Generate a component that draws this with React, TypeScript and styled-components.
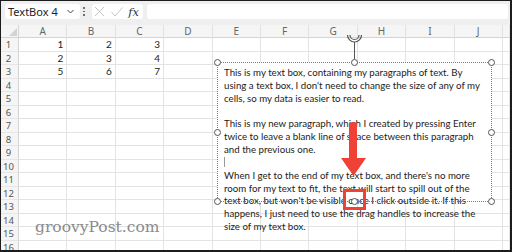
import React from "react";
import styled, { createGlobalStyle } from "styled-components";

const GlobalStyle = createGlobalStyle`
  html, body { margin: 0; padding: 0; background: #1c1c1c; }
  body { width: 512px; height: 252px; overflow: hidden; }
  #root { width: 512px; height: 252px; }
`;

const Frame = styled.div`
  box-sizing: border-box;
  width: 512px;
  height: 252px;
  padding: 1px 2px 2px 1px;
  background: #1c1c1c;
`;

const Window = styled.div`
  position: relative;
  width: 100%;
  height: 100%;
  background: #fff;
  overflow: hidden;
  display: flex;
  flex-direction: column;
`;

const FormulaBar = styled.div`
  flex: 0 0 24px;
  box-sizing: border-box;
  display: flex;
  align-items: flex-start;
  padding: 3px 2px 0 4px;
  background: #efefef;
`;

const Box = styled.div<{ $w?: number; $grow?: boolean }>`
  box-sizing: border-box;
  height: 15px;
  ${(p) => (p.$grow ? "flex: 1 1 auto;" : `flex: 0 0 ${p.$w}px;`)}
  background: #fff;
  border-radius: 3px;
  display: flex;
  align-items: center;
`;

const NameBox = styled(Box)`
  padding: 0 6px 0 3px;
  justify-content: space-between;
  font-family: "Noto Sans", sans-serif;
  font-size: 11px;
  color: #222;
`;

const FuncBox = styled(Box)`
  margin-left: 4px;
  padding: 0 3px 0 2px;
  justify-content: space-between;
`;

const InputBox = styled(Box)`
  margin-left: 4px;
`;

const Dots = styled.div`
  flex: 0 0 8px;
  height: 15px;
  display: flex;
  flex-direction: column;
  align-items: center;
  justify-content: center;
  gap: 2px;
  & > i {
    width: 1.6px;
    height: 1.6px;
    border-radius: 50%;
    background: #555;
  }
`;

const Fx = styled.span`
  font-family: "DejaVu Serif", serif;
  font-style: italic;
  font-size: 11.5px;
  color: #333;
  padding-right: 1px;
`;

const Sheet = styled.div`
  position: relative;
  flex: 1 1 auto;
`;

const Grid = styled.div`
  display: grid;
  grid-template-columns: 18px repeat(10, 48.4px) 1fr;
  grid-template-rows: 13px;
  grid-auto-rows: 13.5px;
`;

const ColHead = styled.div`
  box-sizing: border-box;
  background: #f5f5f5;
  border-bottom: 1px solid #d4d4d4;
  border-right: 1px solid #e2e2e2;
  font-family: "Noto Sans", sans-serif;
  font-size: 10px;
  line-height: 12px;
  color: #666;
  text-align: center;
`;

const Corner = styled(ColHead)`
  position: relative;
  border-right: 1px solid #d4d4d4;
  &::after {
    content: "";
    position: absolute;
    right: 1px;
    bottom: 1px;
    border-style: solid;
    border-width: 0 0 8px 8px;
    border-color: transparent transparent #d3d3d3 transparent;
  }
`;

const RowHead = styled.div`
  box-sizing: border-box;
  background: #f5f5f5;
  border-right: 1px solid #d4d4d4;
  border-bottom: 1px solid #e6e6e6;
  font-family: "Noto Sans", sans-serif;
  font-size: 9.5px;
  line-height: 13px;
  color: #555;
  text-align: center;
  padding-right: 2px;
`;

const Cell = styled.div`
  box-sizing: border-box;
  border-right: 1px solid #e3e3e3;
  border-bottom: 1px solid #e3e3e3;
  font-family: "Lato", sans-serif;
  font-size: 10px;
  line-height: 13px;
  color: #222;
  text-align: right;
  padding-right: 3px;
`;

const TextBox = styled.div`
  position: absolute;
  left: 216px;
  top: 37px;
  width: 275px;
  height: 140px;
  background: #fff;
  z-index: 2;
  &::after {
    content: "";
    position: absolute;
    inset: 0;
    border: 1px dotted #7a7a7a;
    pointer-events: none;
    z-index: 2;
  }
`;

const TextBody = styled.div`
  position: relative;
  z-index: 1;
  padding: 4px 0 0 7px;
  font-family: "Lato", sans-serif;
  font-size: 9.7px;
  line-height: 12.85px;
  color: #222;
  white-space: nowrap;
`;

const Line = styled.div`
  height: 12.85px;
`;

const Caret = styled.span`
  display: inline-block;
  width: 1px;
  height: 10px;
  margin-top: 1px;
  background: #9a9a9a;
  vertical-align: top;
`;

type Pos = "start" | "mid" | "end";
const posCss = (p: Pos) =>
  p === "start" ? "-3px" : p === "mid" ? "calc(50% - 3.5px)" : "calc(100% - 4px)";

const Handle = styled.span<{ $x: Pos; $y: Pos }>`
  position: absolute;
  box-sizing: border-box;
  width: 7px;
  height: 7px;
  left: ${(p) => posCss(p.$x)};
  top: ${(p) => posCss(p.$y)};
  border: 1px solid #555;
  border-radius: 50%;
  background: #fff;
  z-index: 3;
`;

const Rotate = styled.svg`
  position: absolute;
  left: 344px;
  top: 9px;
  z-index: 3;
`;

const Annotation = styled.svg`
  position: absolute;
  left: 338px;
  top: 94px;
  z-index: 5;
`;

const Watermark = styled.p`
  position: absolute;
  margin: 0;
  left: 34px;
  top: 193px;
  font-family: "DejaVu Serif", serif;
  font-size: 15.5px;
  line-height: 18px;
  color: #8a8a8a;
  z-index: 4;
`;

const COLS = ["A", "B", "C", "D", "E", "F", "G", "H", "I", "J", ""];
const DATA: Record<number, number[]> = { 1: [1, 2, 3], 2: [2, 3, 4], 3: [5, 6, 7] };

const LINES: (string | null)[] = [
  "This is my text box, containing my paragraphs of text. By",
  "using a text box, I don't need to change the size of any of my",
  "cells, so my data is easier to read.",
  "",
  "This is my new paragraph, which I created by pressing Enter",
  "twice to leave a blank line of space between this paragraph",
  "and the previous one.",
  null,
  "When I get to the end of my text box, and there's no more",
  "room for my text to fit, the text will start to spill out of the",
  "text box, but won't be visible once I click outside it. If this",
  "happens, I just need to use the drag handles to increase the",
  "size of my text box.",
];

const HANDLES: [Pos, Pos][] = [
  ["start", "start"], ["mid", "start"], ["end", "start"],
  ["start", "mid"], ["end", "mid"],
  ["start", "end"], ["mid", "end"], ["end", "end"],
];

export default function App() {
  const rows = Array.from({ length: 16 }, (_, i) => i + 1);
  return (
    <>
      <GlobalStyle />
      <Frame>
        <Window>
          <FormulaBar>
            <NameBox $w={75}>
              <span>TextBox 4</span>
              <svg width="7" height="5" viewBox="0 0 7 5">
                <path d="M0.5 1 L3.5 4 L6.5 1" fill="none" stroke="#444" strokeWidth="1" />
              </svg>
            </NameBox>
            <Dots>
              <i />
              <i />
              <i />
            </Dots>
            <FuncBox $w={51}>
              <svg width="11" height="11" viewBox="0 0 11 11">
                <path d="M1 1 L10 10 M10 1 L1 10" stroke="#c4c4c4" strokeWidth="1" />
              </svg>
              <svg width="12" height="10" viewBox="0 0 12 10">
                <path d="M0.5 5 L4 9 L11.5 0.5" fill="none" stroke="#c4c4c4" strokeWidth="1" />
              </svg>
              <Fx>fx</Fx>
            </FuncBox>
            <InputBox $grow />
          </FormulaBar>
          <Sheet>
            <Grid>
              <Corner />
              {COLS.map((c, i) => (
                <ColHead key={"h" + i}>{c}</ColHead>
              ))}
              {rows.map((r) => (
                <React.Fragment key={r}>
                  <RowHead>{r}</RowHead>
                  {COLS.map((_, ci) => (
                    <Cell key={ci}>{DATA[r] && DATA[r][ci] !== undefined ? DATA[r][ci] : ""}</Cell>
                  ))}
                </React.Fragment>
              ))}
            </Grid>

            <Watermark>groovyPost.com</Watermark>

            <Rotate width="20" height="26" viewBox="0 0 20 26">
              <path d="M2.5 1 A7 7 0 0 0 16.5 1" fill="none" stroke="#555" strokeWidth="1.2" />
              <path d="M5 1 A4.5 4.5 0 0 0 14 1" fill="none" stroke="#555" strokeWidth="1.2" />
              <path d="M9.5 8 L9.5 25" stroke="#555" strokeWidth="1" />
            </Rotate>

            <TextBox>
              <TextBody>
                {LINES.map((l, i) => (
                  <Line key={i}>{l === null ? <Caret /> : l}</Line>
                ))}
              </TextBody>
              {HANDLES.map(([x, y], i) => (
                <Handle key={i} $x={x} $y={y} />
              ))}
            </TextBox>

            <Annotation width="30" height="94" viewBox="0 0 30 94">
              <path d="M10 6 Q10 3 14 3 Q18 3 18 6 L18 39 L27 39 L14.5 57 L2 39 L10 39 Z" fill="#ef4136" />
              <rect x="5.5" y="71.5" width="20" height="18" fill="none" stroke="#ef4136" strokeWidth="3" />
            </Annotation>
          </Sheet>
        </Window>
      </Frame>
    </>
  );
}
